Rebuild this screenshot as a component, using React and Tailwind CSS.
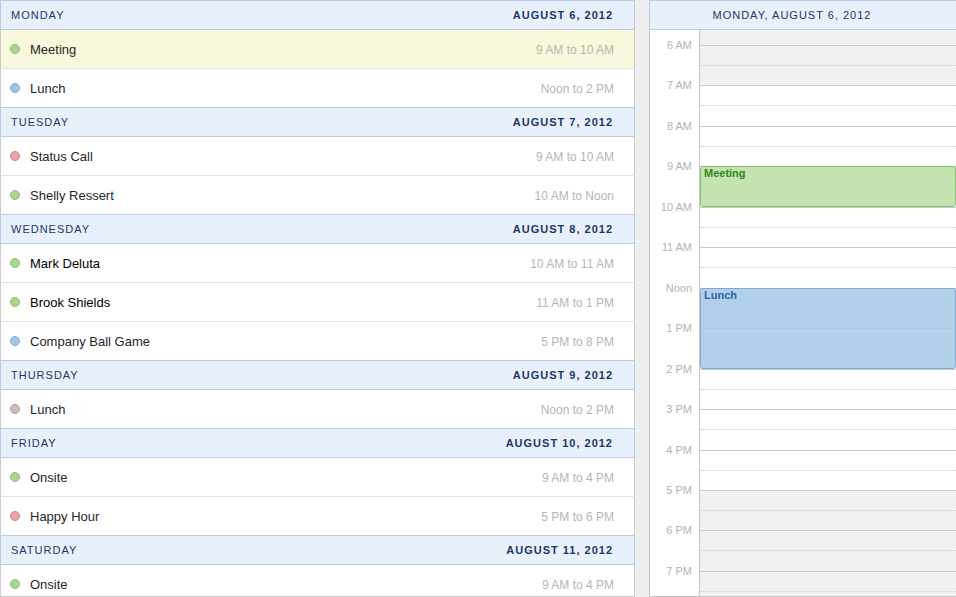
import React from 'react';

const dotColors = {
  green: 'bg-[#a9d78f] border-[#86bf6c]',
  blue: 'bg-[#a3c5ea] border-[#80a8d3]',
  red: 'bg-[#e8a3ad] border-[#cf8089]',
  brown: 'bg-[#cdbdb9] border-[#ad9b96]',
};

const days = [
  {
    day: 'Monday',
    date: 'August 6, 2012',
    events: [
      { title: 'Meeting', time: '9 AM to 10 AM', color: 'green', selected: true },
      { title: 'Lunch', time: 'Noon to 2 PM', color: 'blue' },
    ],
  },
  {
    day: 'Tuesday',
    date: 'August 7, 2012',
    events: [
      { title: 'Status Call', time: '9 AM to 10 AM', color: 'red' },
      { title: 'Shelly Ressert', time: '10 AM to Noon', color: 'green' },
    ],
  },
  {
    day: 'Wednesday',
    date: 'August 8, 2012',
    events: [
      { title: 'Mark Deluta', time: '10 AM to 11 AM', color: 'green', dark: true },
      { title: 'Brook Shields', time: '11 AM to 1 PM', color: 'green', dark: true },
      { title: 'Company Ball Game', time: '5 PM to 8 PM', color: 'blue' },
    ],
  },
  {
    day: 'Thursday',
    date: 'August 9, 2012',
    events: [{ title: 'Lunch', time: 'Noon to 2 PM', color: 'brown' }],
  },
  {
    day: 'Friday',
    date: 'August 10, 2012',
    events: [
      { title: 'Onsite', time: '9 AM to 4 PM', color: 'green' },
      { title: 'Happy Hour', time: '5 PM to 6 PM', color: 'red' },
    ],
  },
  {
    day: 'Saturday',
    date: 'August 11, 2012',
    events: [{ title: 'Onsite', time: '9 AM to 4 PM', color: 'green' }],
  },
];

// off = outside working hours (grey background)
const hours = [
  { label: '6 AM', off: true },
  { label: '7 AM' },
  { label: '8 AM' },
  { label: '9 AM' },
  { label: '10 AM' },
  { label: '11 AM' },
  { label: 'Noon' },
  { label: '1 PM' },
  { label: '2 PM' },
  { label: '3 PM' },
  { label: '4 PM' },
  { label: '5 PM', off: true },
  { label: '6 PM', off: true },
  { label: '7 PM', off: true },
];

function DayGroup({ group }) {
  return (
    <div>
      <div className="h-[30px] border border-[#b6cce8] bg-[#e8f0fb] flex items-center justify-between pl-[10px] pr-[21px] text-[11px] tracking-[1px] uppercase text-[#1c3766]">
        <span>{group.day}</span>
        <span className="font-bold">{group.date}</span>
      </div>
      {group.events.map((ev, i) => (
        <div
          key={i}
          className={
            'flex items-center border-x border-x-[#cbcbcb] pl-[9px] pr-[20px] pt-[2px] ' +
            (i === 0 ? 'h-[38px] ' : 'h-[39px] border-t border-t-[#e4e4e4] ') +
            (ev.selected ? 'bg-[#f8f8dd]' : 'bg-white')
          }
        >
          <span className={'shrink-0 w-[10px] h-[10px] -mt-[2px] rounded-full border ' + dotColors[ev.color]} />
          <span className={'ml-[10px] text-[13px] ' + (ev.dark ? 'text-black' : 'text-[#262626]')}>
            {ev.title}
          </span>
          <span className="ml-auto text-[12px] text-[#b5b5b5]">{ev.time}</span>
        </div>
      ))}
    </div>
  );
}

export default function App() {
  return (
    <div className="flex h-[597px] w-[956px] overflow-hidden bg-[#efefef] font-['Liberation_Sans',Arial,sans-serif]">
      {/* agenda list */}
      <div className="w-[635px] h-full flex flex-col overflow-hidden border-b border-[#c8c8c8] bg-white shrink-0">
        {days.map((g) => (
          <DayGroup key={g.day} group={g} />
        ))}
      </div>

      <div className="w-[14px] shrink-0" />

      {/* day view */}
      <div className="flex-1 h-full flex flex-col">
        <div className="h-[30px] shrink-0 border border-r-0 border-[#b6cce8] bg-[#e8f0fb] flex items-center justify-center pr-[22px] text-[11px] tracking-[1px] uppercase text-[#1c3766]">
          Monday, August 6, 2012
        </div>
        <div className="flex-1 flex overflow-hidden border-l border-b border-[#c4c4c4] bg-white">
          <div className="w-[50px] shrink-0 border-r border-[#c8c8c8] bg-white">
            <div className="h-[15px]" />
            {hours.map((h) => (
              <div key={h.label} className="h-[40.46px] flex justify-end pr-[7px]">
                <span className="-translate-y-1/2 text-[11px] leading-[13px] text-[#b3b3b3] h-fit">
                  {h.label}
                </span>
              </div>
            ))}
          </div>
          <div className="relative flex-1">
            <div className="h-[15px] bg-[#f1f1f1]" />
            {hours.map((h) => (
              <div
                key={h.label}
                className={'h-[40.46px] border-t border-[#c9c9c9] ' + (h.off ? 'bg-[#f1f1f1]' : 'bg-white')}
              >
                <div className="h-[20px] border-b border-dotted border-[#cdcdcd]" />
              </div>
            ))}

            <div className="absolute left-0 right-0 top-[136px] h-[41px] rounded-[3px] border border-[#86c274] bg-[rgba(187,222,162,0.85)] pl-[3px] text-[11px] leading-[13px] font-bold text-[#2f8a1e]">
              Meeting
            </div>
            <div className="absolute left-0 right-0 top-[258px] h-[81px] rounded-[3px] border border-[#80a9d3] bg-[rgba(164,200,230,0.85)] pl-[3px] text-[11px] leading-[13px] font-bold text-[#2f65a8]">
              Lunch
            </div>
          </div>
        </div>
      </div>
    </div>
  );
}
